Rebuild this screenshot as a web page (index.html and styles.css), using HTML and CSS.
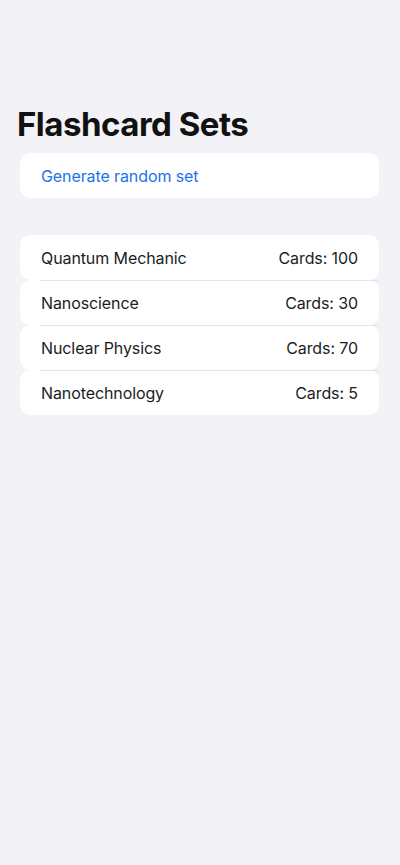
FILE: index.html
```html
<!DOCTYPE html>
<html lang="en">
<head>
    <meta charset="UTF-8">
    <meta name="viewport" content="width=device-width, initial-scale=1.0">
    <title>Flashcard Sets</title>
    <link rel="stylesheet" href="styles.css">
</head>
<body>
    <main class="screen">
        <h1 class="title">Flashcard Sets</h1>

        <div class="group">
            <button type="button" class="row action">Generate random set</button>
        </div>

        <ul class="group set-list">
            <li class="row">
                <span class="set-name">Quantum Mechanic</span>
                <span class="set-count">Cards: 100</span>
            </li>
            <li class="row">
                <span class="set-name">Nanoscience</span>
                <span class="set-count">Cards: 30</span>
            </li>
            <li class="row">
                <span class="set-name">Nuclear Physics</span>
                <span class="set-count">Cards: 70</span>
            </li>
            <li class="row">
                <span class="set-name">Nanotechnology</span>
                <span class="set-count">Cards: 5</span>
            </li>
        </ul>
    </main>
</body>
</html>
```

FILE: styles.css
```css
body {
    margin: 0;
    background-color: #f2f2f7;
    font-family: Inter, "Noto Sans", sans-serif;
    color: #1c1c1e;
}

.screen {
    padding: 104px 21px 0 20px;
}

.title {
    margin: 0 0 8px -3px;
    font-size: 33px;
    font-weight: 700;
    line-height: 41px;
    letter-spacing: -0.5px;
    color: #111;
}

.group {
    list-style: none;
    margin: 0 0 37px;
    padding: 0;
}

.row {
    display: flex;
    justify-content: space-between;
    align-items: center;
    box-sizing: border-box;
    width: 100%;
    height: 45px;
    padding: 0 21px;
    background: #fff;
    border-radius: 10px;
    font-size: 16px;
    letter-spacing: -0.1px;
    font-family: inherit;
    color: inherit;
    position: relative;
}

/* thin divider between list rows, inset like iOS */
.set-list .row + .row::before {
    content: "";
    position: absolute;
    top: 0;
    left: 20px;
    right: 0;
    height: 1px;
    background: #e3e3e8;
}

.action {
    border: none;
    color: #1a74e8;
    text-align: left;
    cursor: pointer;
}
```
